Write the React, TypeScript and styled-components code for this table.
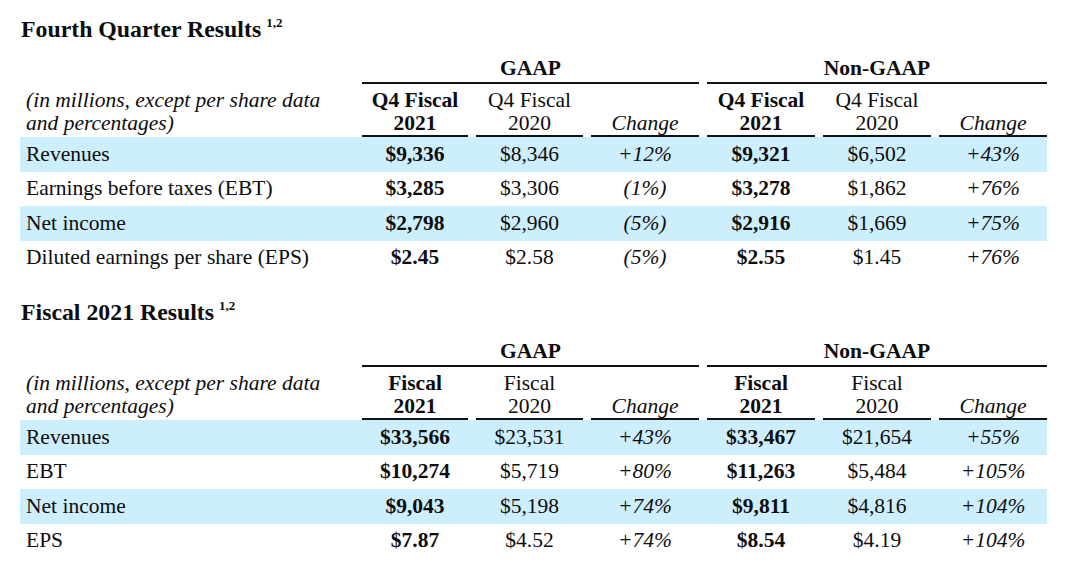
import React from 'react';
import styled, { createGlobalStyle } from 'styled-components';

const GlobalStyle = createGlobalStyle`
  body {
    margin: 0;
    background: #ffffff;
    color: #0d0d0d;
    font-family: "Liberation Serif", "Times New Roman", serif;
  }
`;

const COLS = '334px 106px 107px 108px 108px 108px 108px';

const Page = styled.div`
  padding: 16px 0 0 20px;
  width: 1027px;
`;

const Section = styled.section`
  margin-bottom: 24px;
`;

const Title = styled.h2`
  margin: 0 0 15px 1px;
  font-size: 23.8px;
  line-height: 26px;
  font-weight: bold;
`;

const Sup = styled.sup`
  font-size: 13px;
  vertical-align: 10px;
  line-height: 0;
  margin-left: 5px;
`;

const Grid = styled.div`
  display: grid;
  grid-template-columns: ${COLS};
  column-gap: 8px;
  font-size: 21.5px;
`;

const GroupRow = styled(Grid)`
  line-height: 23px;
`;

const GroupHead = styled.div`
  grid-column: span 3;
  text-align: center;
  font-weight: bold;
  padding-bottom: 2px;
  border-bottom: 2px solid #111;
`;

const HeadRow = styled(Grid)`
  align-items: end;
  line-height: 23px;
`;

const HeadLabel = styled.div`
  font-style: italic;
  padding: 5px 0 2px 6px;
`;

const HeadCell = styled.div<{ $bold?: boolean; $italic?: boolean }>`
  text-align: center;
  padding-top: 5px;
  font-weight: ${({ $bold }) => ($bold ? 'bold' : 'normal')};
  font-style: ${({ $italic }) => ($italic ? 'italic' : 'normal')};
  border-bottom: 2px solid #111;
`;

const DataRow = styled(Grid)<{ $shaded?: boolean }>`
  height: 34.5px;
  align-items: center;
  background: ${({ $shaded }) => ($shaded ? '#cdeefd' : 'transparent')};
`;

const Label = styled.div`
  padding-left: 6px;
`;

const Value = styled.div<{ $kind: 'bold' | 'plain' | 'italic' }>`
  text-align: center;
  font-weight: ${({ $kind }) => ($kind === 'bold' ? 'bold' : 'normal')};
  font-style: ${({ $kind }) => ($kind === 'italic' ? 'italic' : 'normal')};
`;

type Row = { label: string; values: string[] };

const KINDS: Array<'bold' | 'plain' | 'italic'> = ['bold', 'plain', 'italic', 'bold', 'plain', 'italic'];

const quarterRows: Row[] = [
  { label: 'Revenues', values: ['$9,336', '$8,346', '+12%', '$9,321', '$6,502', '+43%'] },
  { label: 'Earnings before taxes (EBT)', values: ['$3,285', '$3,306', '(1%)', '$3,278', '$1,862', '+76%'] },
  { label: 'Net income', values: ['$2,798', '$2,960', '(5%)', '$2,916', '$1,669', '+75%'] },
  { label: 'Diluted earnings per share (EPS)', values: ['$2.45', '$2.58', '(5%)', '$2.55', '$1.45', '+76%'] },
];

const yearRows: Row[] = [
  { label: 'Revenues', values: ['$33,566', '$23,531', '+43%', '$33,467', '$21,654', '+55%'] },
  { label: 'EBT', values: ['$10,274', '$5,719', '+80%', '$11,263', '$5,484', '+105%'] },
  { label: 'Net income', values: ['$9,043', '$5,198', '+74%', '$9,811', '$4,816', '+104%'] },
  { label: 'EPS', values: ['$7.87', '$4.52', '+74%', '$8.54', '$4.19', '+104%'] },
];

const ResultsTable = ({ title, period, rows }: { title: string; period: string; rows: Row[] }) => (
  <Section>
    <Title>
      {title}
      <Sup>1,2</Sup>
    </Title>
    <GroupRow>
      <div />
      <GroupHead>GAAP</GroupHead>
      <GroupHead>Non-GAAP</GroupHead>
    </GroupRow>
    <HeadRow>
      <HeadLabel>
        (in millions, except per share data
        <br />
        and percentages)
      </HeadLabel>
      {[0, 1].map((g) => (
        <React.Fragment key={g}>
          <HeadCell $bold>
            {period}
            <br />
            2021
          </HeadCell>
          <HeadCell>
            {period}
            <br />
            2020
          </HeadCell>
          <HeadCell $italic>Change</HeadCell>
        </React.Fragment>
      ))}
    </HeadRow>
    {rows.map((row, i) => (
      <DataRow key={row.label} $shaded={i % 2 === 0}>
        <Label>{row.label}</Label>
        {row.values.map((v, j) => (
          <Value key={j} $kind={KINDS[j]}>
            {v}
          </Value>
        ))}
      </DataRow>
    ))}
  </Section>
);

const App = () => (
  <Page>
    <GlobalStyle />
    <ResultsTable title="Fourth Quarter Results" period="Q4 Fiscal" rows={quarterRows} />
    <ResultsTable title="Fiscal 2021 Results" period="Fiscal" rows={yearRows} />
  </Page>
);

export default App;
